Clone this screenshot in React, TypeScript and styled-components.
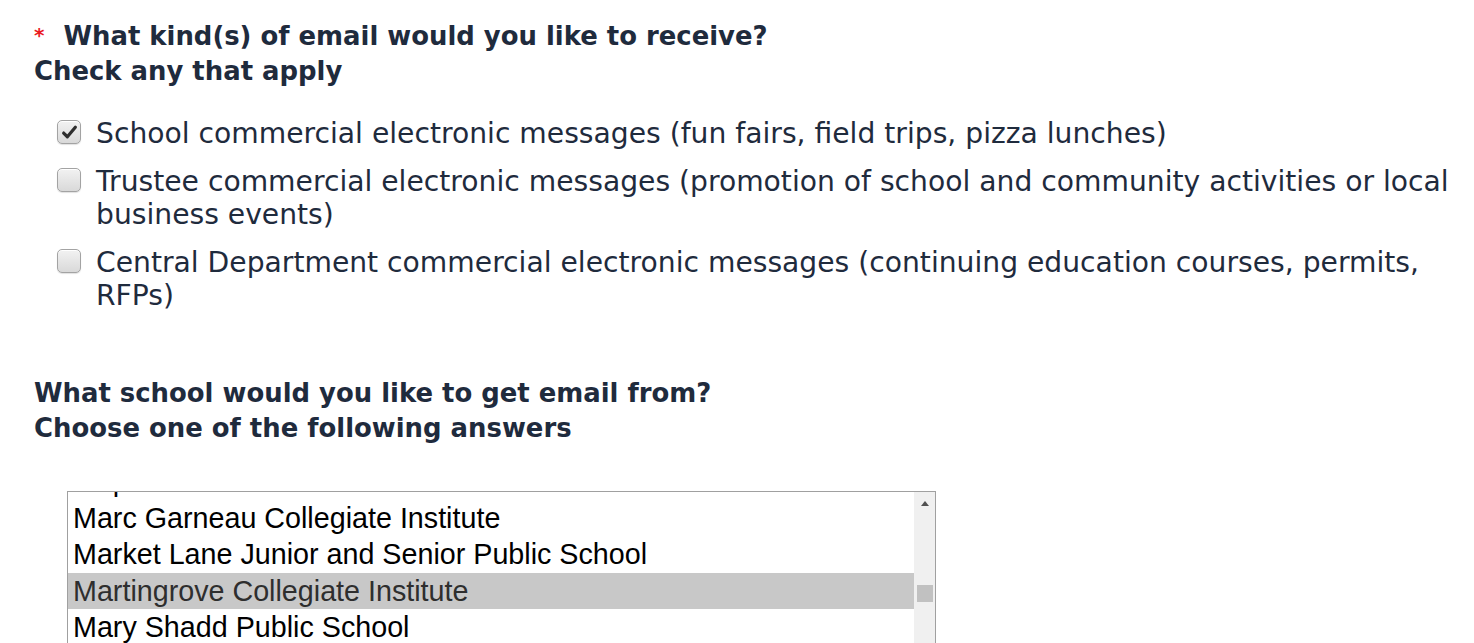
import React from "react";
import styled, { createGlobalStyle } from "styled-components";

const Global = createGlobalStyle`
  html, body { margin: 0; padding: 0; background: #ffffff; }
  body { font-family: "DejaVu Sans", Verdana, sans-serif; color: #1f2b3d; }
`;

const Page = styled.div`
  padding: 18px 0 0 34px;
  width: 1430px;
`;

const Question = styled.div<{ $gap?: number }>`
  font-weight: bold;
  font-size: 25.9px;
  line-height: 35px;
  margin-top: ${(p) => p.$gap ?? 0}px;
`;

const Required = styled.span`
  color: #ea1a1f;
  font-size: 20px;
  margin-right: 19px;
  vertical-align: 3px;
`;

const Options = styled.div`
  margin: 28px 0 0 23px;
  display: flex;
  flex-direction: column;
  gap: 15px;
`;

const Option = styled.label`
  display: flex;
  align-items: flex-start;
  gap: 15px;
  font-size: 28.2px;
  line-height: 33px;
`;

const Box = styled.span`
  flex: none;
  width: 24px;
  height: 24px;
  margin-top: 3px;
  border: 1px solid #a3a3a3;
  border-radius: 5px;
  background: linear-gradient(#f2f2f2, #d9d9d9);
  box-shadow: inset 0 1px 0 #ffffff, 0 1px 1px rgba(0, 0, 0, 0.12);
  display: flex;
  align-items: center;
  justify-content: center;
  box-sizing: border-box;
`;

const Listbox = styled.div`
  margin: 45px 0 0 33px;
  width: 869px;
  height: 170px;
  box-sizing: border-box;
  border: 1px solid #a0a0a0;
  border-bottom: none;
  display: flex;
  font-family: "Liberation Sans", Arial, sans-serif;
  font-size: 28.7px;
  color: #000;
  overflow: hidden;
`;

const Items = styled.div`
  flex: 1;
  overflow: hidden;
`;

const ItemTrack = styled.div`
  margin-top: -29px;
`;

const Item = styled.div<{ $selected?: boolean }>`
  height: 36.5px;
  line-height: 36.5px;
  padding-left: 5px;
  white-space: nowrap;
  background: ${(p) => (p.$selected ? "#c8c8c8" : "transparent")};
  color: ${(p) => (p.$selected ? "#2e2e2e" : "#000")};
`;

const Scrollbar = styled.div`
  flex: none;
  width: 21px;
  background: #f0f0f0;
  display: flex;
  flex-direction: column;
  align-items: center;
`;

const Arrow = styled.div`
  margin-top: 9px;
  width: 0;
  height: 0;
  border-left: 4px solid transparent;
  border-right: 4px solid transparent;
  border-bottom: 5px solid #505050;
`;

const Thumb = styled.div`
  margin-top: 79px;
  width: 16px;
  height: 17px;
  background: #c1c1c1;
`;

const Check = () => (
  <svg width="17" height="17" viewBox="0 0 16 16">
    <path d="M2.5 8.5 L6 12 L13.5 3" fill="none" stroke="#2e2e2e" strokeWidth="3" strokeLinecap="round" strokeLinejoin="round" />
  </svg>
);

const options = [
  { text: "School commercial electronic messages (fun fairs, field trips, pizza lunches)", checked: true },
  { text: "Trustee commercial electronic messages (promotion of school and community activities or local business events)", checked: false },
  { text: "Central Department commercial electronic messages (continuing education courses, permits, RFPs)", checked: false },
];

const schools = [
  "Maple Leaf Junior Public School",
  "Marc Garneau Collegiate Institute",
  "Market Lane Junior and Senior Public School",
  "Martingrove Collegiate Institute",
  "Mary Shadd Public School",
];

export default function App() {
  return (
    <>
      <Global />
      <Page>
        <Question>
          <Required>*</Required>What kind(s) of email would you like to receive?
          <br />
          Check any that apply
        </Question>
        <Options>
          {options.map((o) => (
            <Option key={o.text}>
              <Box>{o.checked && <Check />}</Box>
              <span>{o.text}</span>
            </Option>
          ))}
        </Options>
        <Question $gap={64}>
          What school would you like to get email from?
          <br />
          Choose one of the following answers
        </Question>
        <Listbox>
          <Items>
            <ItemTrack>
              {schools.map((s) => (
                <Item key={s} $selected={s === "Martingrove Collegiate Institute"}>
                  {s}
                </Item>
              ))}
            </ItemTrack>
          </Items>
          <Scrollbar>
            <Arrow />
            <Thumb />
          </Scrollbar>
        </Listbox>
      </Page>
    </>
  );
}
